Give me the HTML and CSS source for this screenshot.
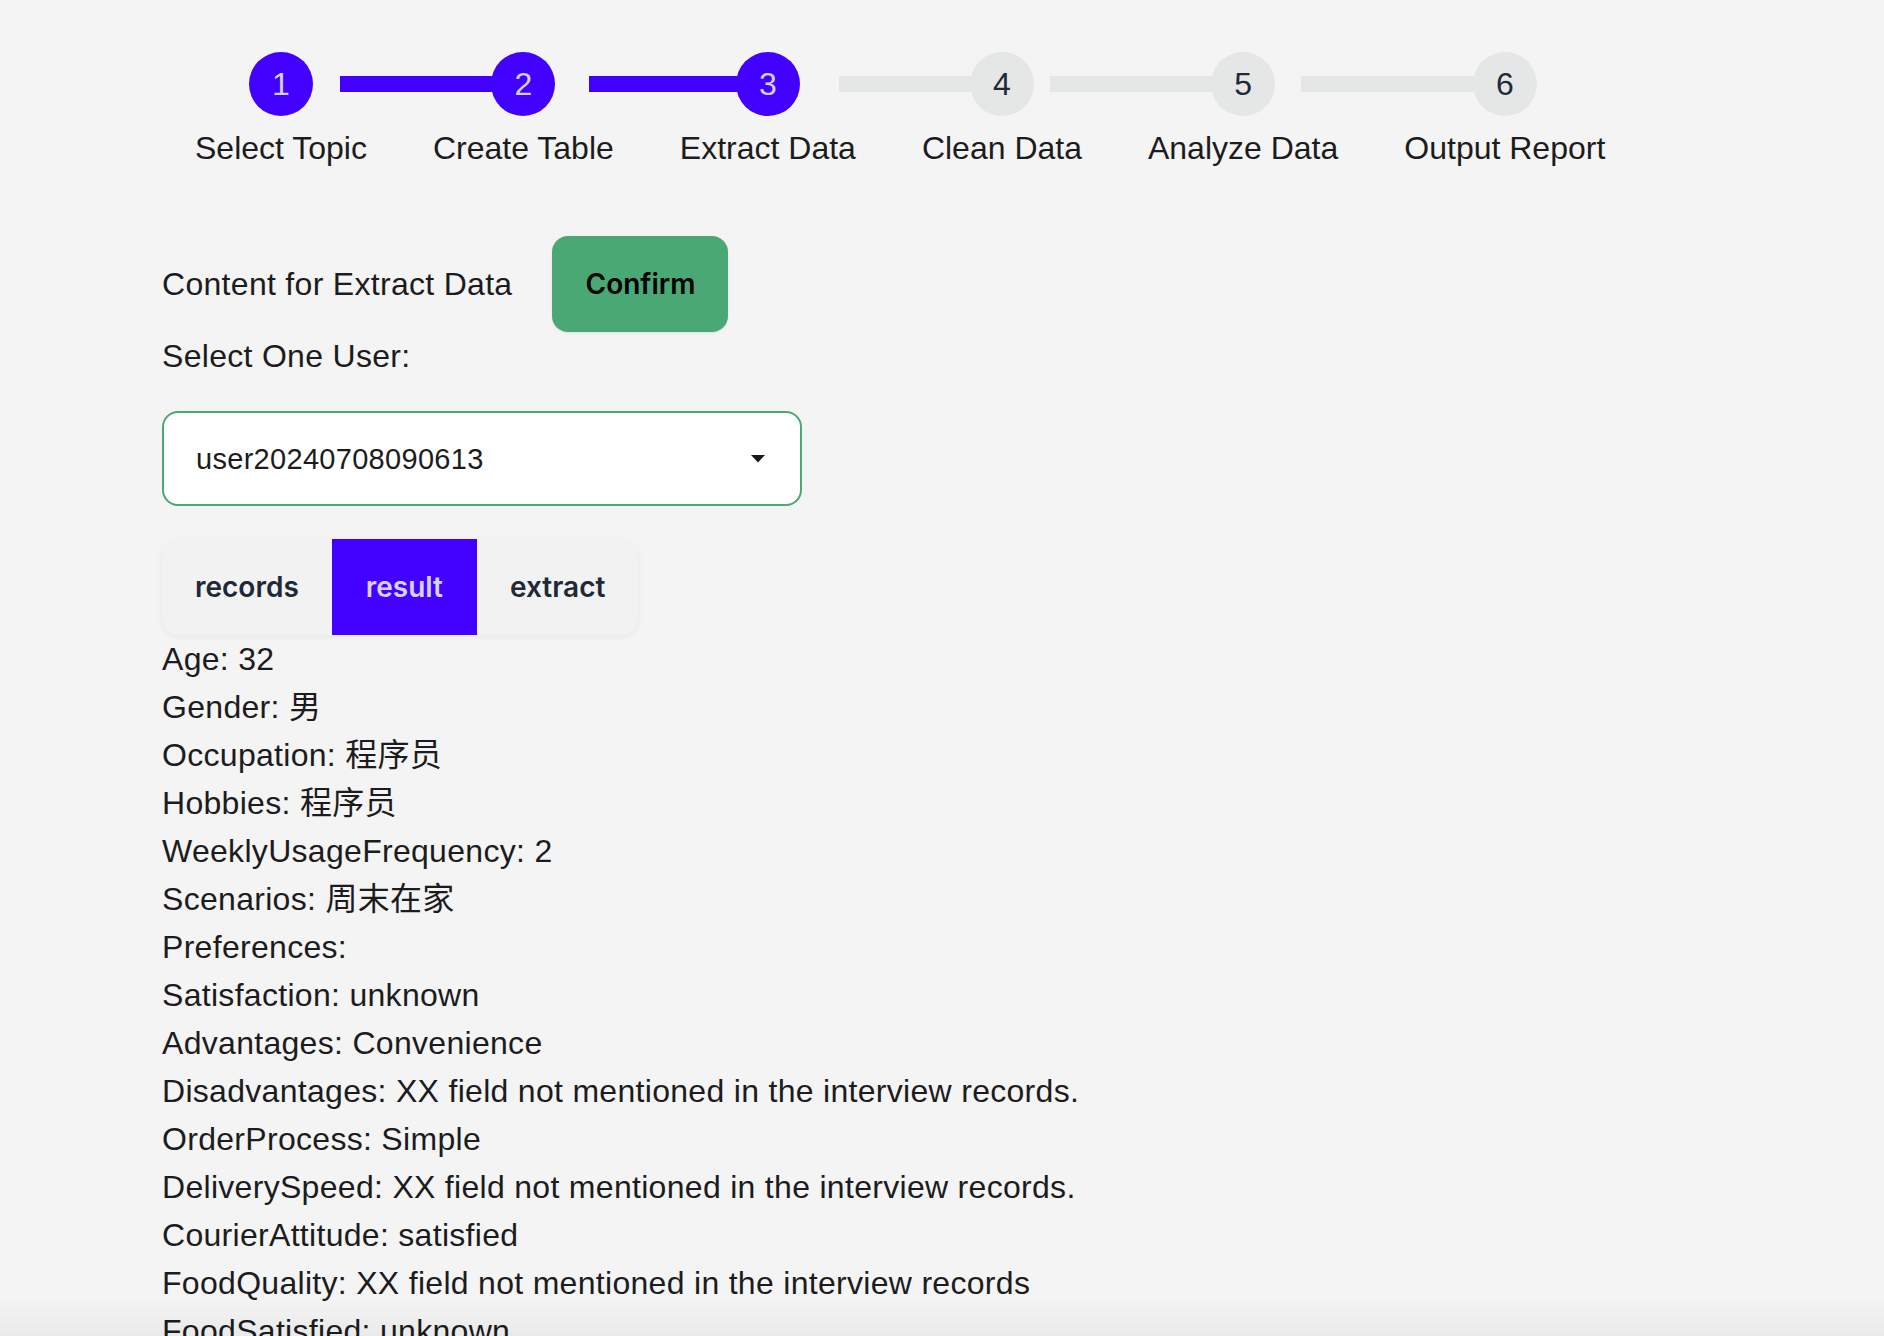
FILE: index.html
```html
<!DOCTYPE html>
<html lang="en">
<head>
<meta charset="utf-8">
<title>Extract Data</title>
<link rel="stylesheet" href="styles.css">
</head>
<body>
<div class="page">
  <ul class="steps">
    <li class="step done"><div class="step-inner"><span class="step-dot">1</span><span class="step-label">Select Topic</span></div></li>
    <li class="step done"><div class="step-inner"><span class="step-dot">2</span><span class="step-label">Create Table</span></div></li>
    <li class="step done"><div class="step-inner"><span class="step-dot">3</span><span class="step-label">Extract Data</span></div></li>
    <li class="step"><div class="step-inner"><span class="step-dot">4</span><span class="step-label">Clean Data</span></div></li>
    <li class="step"><div class="step-inner"><span class="step-dot">5</span><span class="step-label">Analyze Data</span></div></li>
    <li class="step"><div class="step-inner"><span class="step-dot">6</span><span class="step-label">Output Report</span></div></li>
  </ul>

  <section class="panel">
    <div class="panel-head">
      <span class="panel-title">Content for Extract Data</span>
      <button class="btn-confirm" type="button">Confirm</button>
    </div>
    <p class="select-label">Select One User:</p>
    <div class="select">
      <span class="select-value">user20240708090613</span>
      <svg class="select-caret" width="16" height="9" viewBox="0 0 16 9" aria-hidden="true"><path d="M1 1 L15 1 L8 8.5 Z" fill="#1a1a1a"/></svg>
    </div>
    <div class="tabs">
      <span class="tab">records</span>
      <span class="tab tab-active">result</span>
      <span class="tab">extract</span>
    </div>
    <div class="result">
      <div class="row">Age: 32</div>
      <div class="row">Gender: 男</div>
      <div class="row">Occupation: 程序员</div>
      <div class="row">Hobbies: 程序员</div>
      <div class="row">WeeklyUsageFrequency: 2</div>
      <div class="row">Scenarios: 周末在家</div>
      <div class="row">Preferences: </div>
      <div class="row">Satisfaction: unknown</div>
      <div class="row">Advantages: Convenience</div>
      <div class="row">Disadvantages: XX field not mentioned in the interview records.</div>
      <div class="row">OrderProcess: Simple</div>
      <div class="row">DeliverySpeed: XX field not mentioned in the interview records.</div>
      <div class="row">CourierAttitude: satisfied</div>
      <div class="row">FoodQuality: XX field not mentioned in the interview records</div>
      <div class="row">FoodSatisfied: unknown</div>
    </div>
  </section>
</div>
<div class="bottom-shade"></div>
</body>
</html>
```

FILE: styles.css
```css
html, body {
  margin: 0;
  padding: 0;
  background: #f4f4f4;
  overflow: hidden;
  height: 100%;
}
body {
  font-family: "Liberation Sans", Arial, "Noto Sans CJK SC", sans-serif;
  color: #1c1c1e;
  font-size: 32px;
  line-height: 48px;
  letter-spacing: 0.3px;
}
.page {
  padding: 44px 0 0 162px;
}

/* steps */
.steps {
  list-style: none;
  margin: 0;
  padding: 0;
  display: flex;
  letter-spacing: 0;
}
.step {
  padding: 0 33px;
}
.step-inner {
  position: relative;
  display: grid;
  grid-template-rows: 80px 48px;
  justify-items: center;
  align-items: center;
}
.step + .step .step-inner::before {
  content: "";
  position: absolute;
  top: 32px;
  right: 50%;
  width: calc(100% + 3px);
  height: 16px;
  background: #e5e6e6;
}
.step.done + .step.done .step-inner::before {
  background: #4100ff;
}
.step-dot {
  position: relative;
  z-index: 1;
  width: 64px;
  height: 64px;
  border-radius: 50%;
  background: #e5e6e6;
  color: #1f2937;
  display: flex;
  align-items: center;
  justify-content: center;
  font-size: 32px;
  line-height: 1;
}
.step.done .step-dot {
  background: #4100ff;
  color: #d6d2ff;
}
.step-label {
  white-space: nowrap;
  color: #1c1c1e;
}

/* panel */
.panel {
  margin-top: 64px;
}
.panel-head {
  display: flex;
  align-items: center;
  gap: 40px;
}
.btn-confirm {
  height: 96px;
  width: 176px;
  border: none;
  border-radius: 16px;
  background: #4aa874;
  color: #000;
  font-family: Inter, "Liberation Sans", sans-serif;
  font-weight: 600;
  font-size: 28px;
  box-shadow: 0 1px 3px rgba(0,0,0,0.08);
  padding: 0;
}
.select-label {
  margin: 0 0 31px;
  line-height: 48px;
}
.select {
  box-sizing: border-box;
  width: 640px;
  height: 95px;
  background: #fff;
  border: 2px solid #4aa874;
  border-radius: 16px;
  display: flex;
  align-items: center;
  justify-content: space-between;
  padding: 0 34px 0 32px;
  font-size: 29px;
}
.select-caret {
  display: block;
}

/* tabs */
.tabs {
  margin-top: 33px;
  display: inline-flex;
  height: 96px;
  background: #f2f2f2;
  border-radius: 16px;
  box-shadow: 0 2px 6px rgba(0,0,0,0.05);
  overflow: hidden;
}
.tab {
  display: flex;
  align-items: center;
  padding: 0 33px;
  font-family: Inter, "Liberation Sans", sans-serif;
  font-weight: 600;
  font-size: 28px;
  letter-spacing: 0;
  color: #1f2937;
}
.tab-active {
  background: #4100ff;
  color: #d6d2ff;
  padding: 0 34px;
}

/* result */
.result {
  font-size: 32px;
}
.row {
  height: 48px;
  line-height: 48px;
  white-space: nowrap;
}

.bottom-shade {
  position: fixed;
  left: 0;
  right: 0;
  bottom: 0;
  height: 40px;
  background: linear-gradient(to bottom, rgba(0,0,0,0), rgba(0,0,0,0.04));
  pointer-events: none;
}
```
